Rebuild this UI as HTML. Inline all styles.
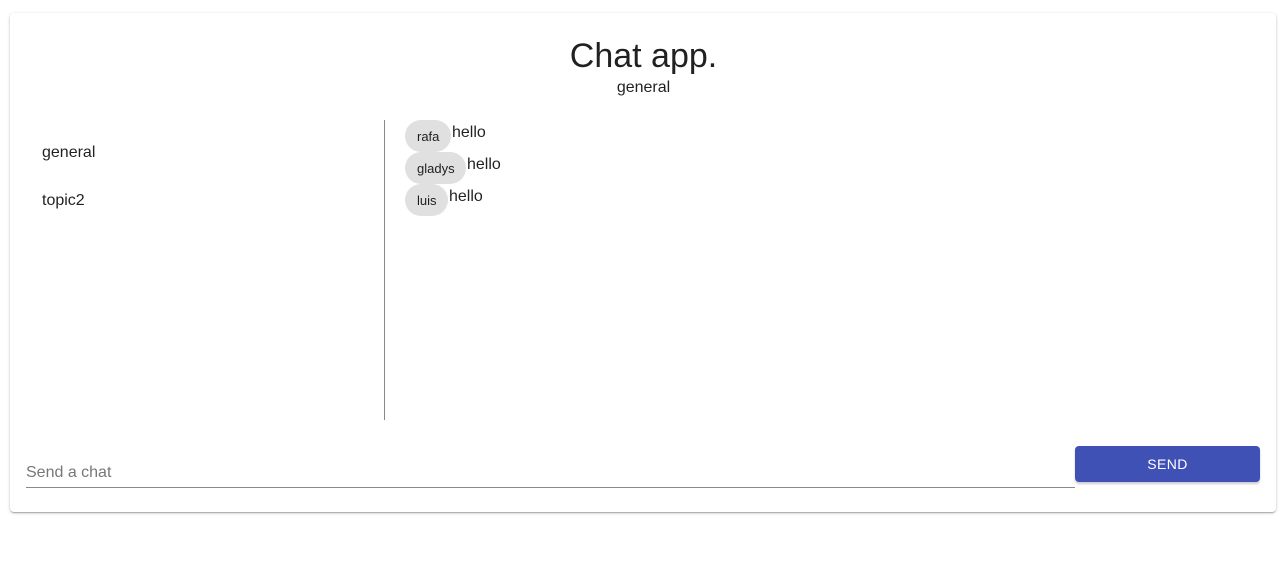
<!DOCTYPE html>
<html><head><style>
body{margin:0;background:#fff;font-family:"Liberation Sans",Arial,sans-serif;color:rgba(0,0,0,.87);}
.card{position:absolute;left:10px;top:13px;width:1266px;height:499px;background:#fff;border-radius:4px;box-shadow:0 1px 3px rgba(0,0,0,.2),0 1px 1px rgba(0,0,0,.14),0 2px 1px -1px rgba(0,0,0,.12);}
.t{position:absolute;left:0;width:1287px;text-align:center;}
.li{position:absolute;left:42px;font-size:16px;}
.div{position:absolute;left:384px;top:120px;width:1px;height:300px;background:#888;}
.row{position:absolute;left:405px;height:32px;display:flex;align-items:flex-start;}
.chip{height:32px;border-radius:16px;background:#e0e0e0;font-size:13px;line-height:34px;padding:0 12px;box-sizing:border-box;}
.msg{font-size:16px;line-height:26px;margin-left:1px;}
.inp{position:absolute;left:26px;top:460px;width:1049px;height:27px;border-bottom:1px solid #8a8a8a;font-size:16px;color:#777;line-height:26px;}
.btn{position:absolute;left:1075px;top:446px;width:185px;height:36px;background:#3f51b5;color:#fff;border-radius:4px;font-size:14px;text-align:center;line-height:36px;letter-spacing:.4px;box-shadow:0 2px 2px rgba(0,0,0,.2);}
</style></head><body>
<div class="card"></div>
<div class="t" style="top:36px;font-size:34px;line-height:40px;">Chat app.</div>
<div class="t" style="top:78px;font-size:16px;line-height:20px;">general</div>
<div class="li" style="top:144px;">general</div>
<div class="li" style="top:192px;">topic2</div>
<div class="div"></div>
<div class="row" style="top:120px;"><div class="chip" style="width:46px">rafa</div><div class="msg">hello</div></div>
<div class="row" style="top:152px;"><div class="chip" style="width:61px">gladys</div><div class="msg">hello</div></div>
<div class="row" style="top:184px;"><div class="chip" style="width:43px">luis</div><div class="msg">hello</div></div>
<div class="inp">Send a chat</div>
<div class="btn">SEND</div>
</body></html>
